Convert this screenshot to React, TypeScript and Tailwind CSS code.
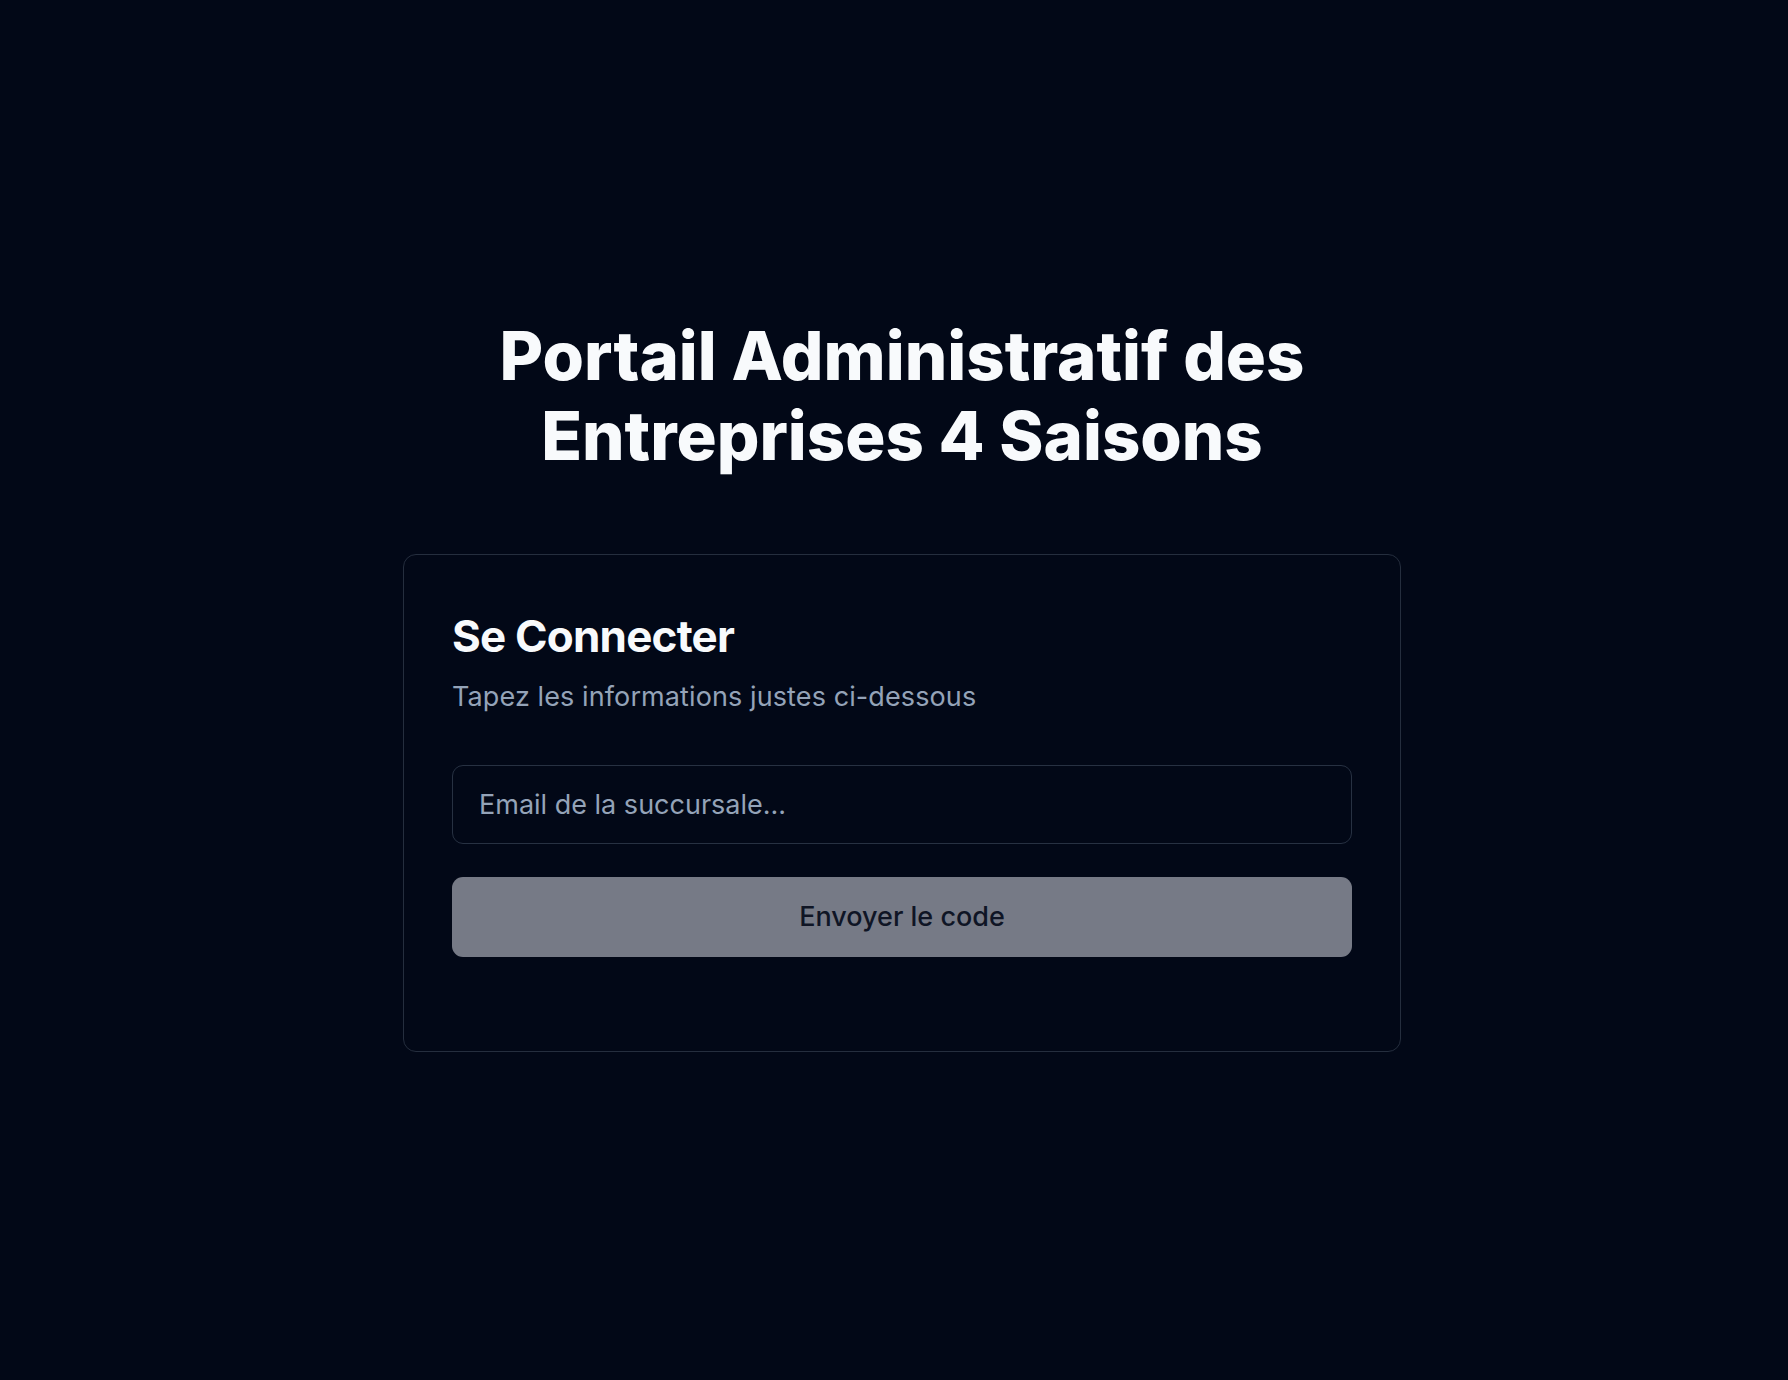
import React from "react";

export default function App() {
  return (
    <div
      className="min-h-screen w-full bg-[#020817] flex flex-col items-center pl-[16px] pt-[316px]"
      style={{ fontFamily: "Inter, 'Noto Sans', sans-serif" }}
    >
      <h1 className="text-center text-[67px] leading-[80px] font-extrabold tracking-[0px] text-[#f8fafc]">
        Portail Administratif des
        <br />
        Entreprises 4 Saisons
      </h1>
      <div className="mt-[78px] w-[998px] rounded-[13px] border border-[#252e3e] bg-[#020817] px-[48px] pt-[59px] pb-[94px]">
        <h2 className="text-[44px] leading-[44px] font-bold tracking-[-0.8px] text-[#f8fafc]">
          Se Connecter
        </h2>
        <p className="mt-[19px] text-[27px] leading-[40px] tracking-[0.1px] text-[#94a3b8]">
          Tapez les informations justes ci-dessous
        </p>
        <div className="mt-[48px] flex flex-col gap-[33px]">
          <input
            type="email"
            placeholder="Email de la succursale..."
            className="h-[79px] w-full rounded-[11px] border border-[#273142] bg-[#020817] px-[26px] text-[27px] text-[#f8fafc] placeholder:text-[#94a3b8] outline-none"
          />
          <button
            disabled
            className="h-[80px] w-full rounded-[11px] bg-[#767a86] text-[27px] font-medium text-[#0f1525]"
          >
            Envoyer le code
          </button>
        </div>
      </div>
    </div>
  );
}
